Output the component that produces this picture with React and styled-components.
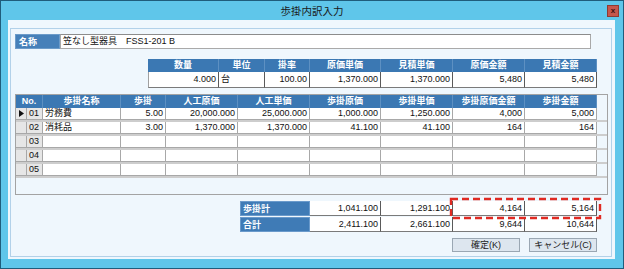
import React from "react";
import styled, { createGlobalStyle } from "styled-components";

const GlobalStyle = createGlobalStyle`
  html, body {
    margin: 0;
    padding: 0;
    background: #ffffff;
  }
  * {
    box-sizing: border-box;
  }
`;

const FONT = `"Liberation Sans", "Noto Sans CJK JP", sans-serif`;

const StyledWindow = styled.div`
  width: 624px;
  height: 269px;
  display: flex;
  flex-direction: column;
  background: #5fc6ea;
  border: 1px solid #1f5d7c;
  font-family: ${FONT};
  font-size: 9px;
  color: #111;
`;

const StyledTitleBar = styled.div`
  height: 19px;
  display: flex;
  align-items: center;
  padding-left: 16px;
`;

const StyledTitle = styled.div`
  flex: 1;
  text-align: center;
  font-size: 10.5px;
  color: #1a1a1a;
`;

const StyledClose = styled.div`
  width: 12px;
  height: 12px;
  margin-right: 4px;
  margin-top: 1px;
  background: #c6564c;
  border: 1px solid #8e3a33;
  color: #3a1010;
  font-size: 8px;
  line-height: 9px;
  text-align: center;
  font-weight: bold;
`;

const StyledClient = styled.div`
  flex: 1;
  margin: 0 8px 9px 7px;
  background: #eff7fd;
  display: flex;
`;

const StyledPanel = styled.div`
  flex: 1;
  margin: 8px 3px 2px 2px;
  border: 1px solid #b2d1e9;
  display: flex;
  flex-direction: column;
  padding: 5px 3px 0 4px;
`;

const StyledNameRow = styled.div`
  display: flex;
  height: 15px;
  margin-right: 17px;
`;

const StyledLabel = styled.div`
  width: ${(p) => p.width || 45}px;
  background: #4680b9;
  color: #fff;
  font-weight: bold;
  padding-left: 3px;
  line-height: 15px;
  border: 1px solid #6c9bc9;
`;

const StyledNameInput = styled.div`
  flex: 1;
  background: #fff;
  border: 1px solid #a9a9a9;
  border-top-color: #8c8c8c;
  padding-left: 2px;
  line-height: 13px;
  white-space: pre;
`;

const StyledSummary = styled.div`
  align-self: flex-end;
  margin-right: 11px;
  margin-top: 10px;
  display: grid;
  grid-template-columns: 71px 46px 45px 71px 72px 72px 72px;
`;

const StyledHead = styled.div`
  height: ${(p) => p.h || 13}px;
  line-height: ${(p) => p.h || 13}px;
  background: #3b78b3;
  color: #fff;
  font-weight: bold;
  text-align: center;
  grid-column: ${(p) => (p.span ? `span ${p.span}` : "auto")};
  border-right: 1px solid #5d90c2;
  white-space: nowrap;
  overflow: hidden;
`;

const StyledValue = styled.div`
  height: ${(p) => p.h || 16}px;
  line-height: ${(p) => (p.h || 16) - 1}px;
  background: #fff;
  text-align: ${(p) => p.align || "right"};
  padding: 0 2px 0 2px;
  border-right: 1px solid #5a5a5a;
  border-bottom: 1px solid #7a7a7a;
  border-left: ${(p) => (p.first ? "1px solid #a0a0a0" : "none")};
  white-space: nowrap;
`;

const StyledGrid = styled.div`
  margin-top: 6px;
  height: 101px;
  border: 1px solid #a3a3a3;
  background: #eff7fd;
`;

const COLS = "11px 16px 78px 45px 72px 72px 71px 72px 72px 72px";

const StyledGridHeader = styled.div`
  display: grid;
  grid-template-columns: ${COLS};
`;

const StyledGridRow = styled.div`
  display: grid;
  grid-template-columns: ${COLS};
  height: 14px;
  border-bottom: 2px solid #cdcdcd;
`;

const StyledCell = styled.div`
  background: ${(p) => (p.gray ? "#e6e6e6" : "#fff")};
  border-right: 1px solid #a8a8a8;
  border-bottom: 1px solid #a8a8a8;
  text-align: ${(p) => p.align || "right"};
  padding: 0 2px;
  line-height: 11px;
  white-space: nowrap;
  overflow: hidden;
  display: flex;
  align-items: center;
  justify-content: ${(p) =>
    p.align === "left" ? "flex-start" : p.align === "center" ? "center" : "flex-end"};
`;

const StyledTotals = styled.div`
  position: relative;
  align-self: flex-end;
  margin-right: 11px;
  margin-top: 6px;
  display: grid;
  grid-template-columns: 70px 71px 72px 72px 72px;
  row-gap: 1px;
`;

const StyledTotalLabel = styled.div`
  height: 15px;
  line-height: 15px;
  background: #3f7bb6;
  color: #fff;
  font-weight: bold;
  padding-left: 2px;
  border: 1px solid #6a9acb;
`;

const StyledHighlight = styled.svg`
  position: absolute;
  left: 210px;
  top: -3px;
  width: 151px;
  height: 21px;
  overflow: visible;
  pointer-events: none;
`;

const StyledButtons = styled.div`
  align-self: flex-end;
  margin-right: 11px;
  margin-top: 6px;
  display: flex;
  gap: 9px;
`;

const StyledButton = styled.div`
  width: 68px;
  height: 14px;
  line-height: 12px;
  text-align: center;
  background: #dde6ef;
  border: 1px solid #9aa7b3;
  color: #222;
`;

const summaryHeads = ["数量", "単位", "掛率", "原価単価", "見積単価", "原価金額", "見積金額"];
const summaryValues = ["4.000", "台", "100.00", "1,370.000", "1,370.000", "5,480", "5,480"];

const gridHeads = ["歩掛名称", "歩掛", "人工原価", "人工単価", "歩掛原価", "歩掛単価", "歩掛原価金額", "歩掛金額"];

const rows = [
  { no: "01", cells: ["労務費", "5.00", "20,000.000", "25,000.000", "1,000.000", "1,250.000", "4,000", "5,000"], current: true },
  { no: "02", cells: ["消耗品", "3.00", "1,370.000", "1,370.000", "41.100", "41.100", "164", "164"] },
  { no: "03", cells: ["", "", "", "", "", "", "", ""] },
  { no: "04", cells: ["", "", "", "", "", "", "", ""] },
  { no: "05", cells: ["", "", "", "", "", "", "", ""] },
];

const totals = [
  { label: "歩掛計", values: ["1,041.100", "1,291.100", "4,164", "5,164"] },
  { label: "合計", values: ["2,411.100", "2,661.100", "9,644", "10,644"] },
];

const App = () => {
  return (
    <StyledWindow>
      <GlobalStyle />
      <StyledTitleBar>
        <StyledTitle>歩掛内訳入力</StyledTitle>
        <StyledClose>x</StyledClose>
      </StyledTitleBar>
      <StyledClient>
        <StyledPanel>
          <StyledNameRow>
            <StyledLabel>名称</StyledLabel>
            <StyledNameInput>{"笠なし型器具　FSS1-201 B"}</StyledNameInput>
          </StyledNameRow>

          <StyledSummary>
            {summaryHeads.map((h) => (
              <StyledHead key={h}>{h}</StyledHead>
            ))}
            {summaryValues.map((v, i) => (
              <StyledValue key={i} first={i === 0} align={i === 1 ? "left" : "right"}>
                {v}
              </StyledValue>
            ))}
          </StyledSummary>

          <StyledGrid>
            <StyledGridHeader>
              <StyledHead span={2}>No.</StyledHead>
              {gridHeads.map((h) => (
                <StyledHead key={h}>{h}</StyledHead>
              ))}
            </StyledGridHeader>
            {rows.map((r) => (
              <StyledGridRow key={r.no}>
                <StyledCell gray align="center">
                  {r.current && (
                    <svg width="5" height="7" viewBox="0 0 5 7">
                      <polygon points="0,0 5,3.5 0,7" fill="#111" />
                    </svg>
                  )}
                </StyledCell>
                <StyledCell gray align="left">
                  {r.no}
                </StyledCell>
                {r.cells.map((c, i) => (
                  <StyledCell key={i} align={i === 0 ? "left" : "right"}>
                    {c}
                  </StyledCell>
                ))}
              </StyledGridRow>
            ))}
          </StyledGrid>

          <StyledTotals>
            {totals.map((t) => (
              <React.Fragment key={t.label}>
                <StyledTotalLabel>{t.label}</StyledTotalLabel>
                {t.values.map((v, i) => (
                  <StyledValue key={i} h={15}>
                    {v}
                  </StyledValue>
                ))}
              </React.Fragment>
            ))}
            <StyledHighlight viewBox="0 0 151 21">
              <rect
                x="1"
                y="1"
                width="149"
                height="19"
                fill="none"
                stroke="#e02a22"
                strokeWidth="2.4"
                strokeDasharray="7 4"
              />
            </StyledHighlight>
          </StyledTotals>

          <StyledButtons>
            <StyledButton>確定(K)</StyledButton>
            <StyledButton>キャンセル(C)</StyledButton>
          </StyledButtons>
        </StyledPanel>
      </StyledClient>
    </StyledWindow>
  );
};

export default App;
